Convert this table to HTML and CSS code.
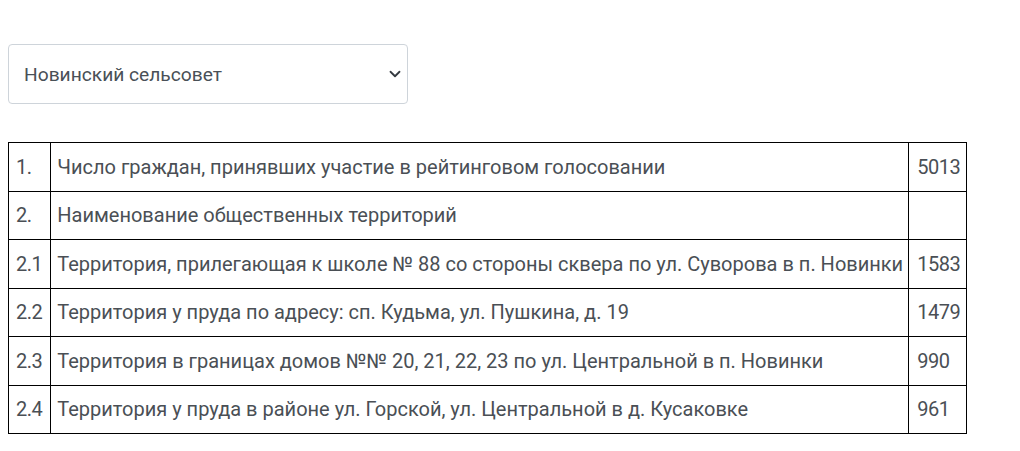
FILE: index.html
```html
<!DOCTYPE html>
<html lang="ru">
<head>
<meta charset="utf-8">
<link rel="stylesheet" href="styles.css">
</head>
<body>
<div class="page">
  <div class="select-wrap">
    <div class="select">
      <span>Новинский сельсовет</span>
      <svg class="chev" width="12" height="12" viewBox="0 0 16 16"><path d="M2 5l6 6 6-6" fill="none" stroke="#343a40" stroke-width="2.4" stroke-linecap="round" stroke-linejoin="round"/></svg>
    </div>
  </div>
  <table class="results">
    <tr><td class="num">1.</td><td class="name">Число граждан, принявших участие в рейтинговом голосовании</td><td class="val">5013</td></tr>
    <tr><td class="num">2.</td><td class="name">Наименование общественных территорий</td><td class="val"></td></tr>
    <tr><td class="num">2.1</td><td class="name">Территория, прилегающая к школе № 88 со стороны сквера по ул. Суворова в п. Новинки</td><td class="val">1583</td></tr>
    <tr><td class="num">2.2</td><td class="name">Территория у пруда по адресу: сп. Кудьма, ул. Пушкина, д. 19</td><td class="val">1479</td></tr>
    <tr><td class="num">2.3</td><td class="name">Территория в границах домов №№ 20, 21, 22, 23 по ул. Центральной в п. Новинки</td><td class="val">990</td></tr>
    <tr><td class="num">2.4</td><td class="name">Территория у пруда в районе ул. Горской, ул. Центральной в д. Кусаковке</td><td class="val">961</td></tr>
  </table>
</div>
</body>
</html>
```

FILE: styles.css
```css
html, body {
  margin: 0;
  padding: 0;
  background: #fff;
}
body {
  font-family: Roboto, "Noto Sans", sans-serif;
  color: #4a4f55;
  font-size: 20px;
}
.page {
  padding: 44px 8px 0 8px;
}
.select-wrap {
  margin-bottom: 38px;
}
.select {
  box-sizing: border-box;
  width: 400px;
  height: 60px;
  border: 1px solid #ced4da;
  border-radius: 4px;
  display: flex;
  align-items: center;
  justify-content: space-between;
  padding: 0 4px 0 15px;
  font-size: 19.2px;
  color: #495057;
}
.chev {
  margin-right: 2px;
}
.results {
  border-collapse: collapse;
}
.results td {
  border: 1px solid #000;
  height: 48.5px;
  box-sizing: border-box;
  vertical-align: middle;
  white-space: nowrap;
}
.results td.num {
  letter-spacing: -0.5px;
  padding: 0 8px 0 7px;
}
.results td.name {
  padding: 0 5px 0 6px;
}
.results td.val {
  letter-spacing: -0.5px;
  padding: 0 6px 0 8px;
}
```
